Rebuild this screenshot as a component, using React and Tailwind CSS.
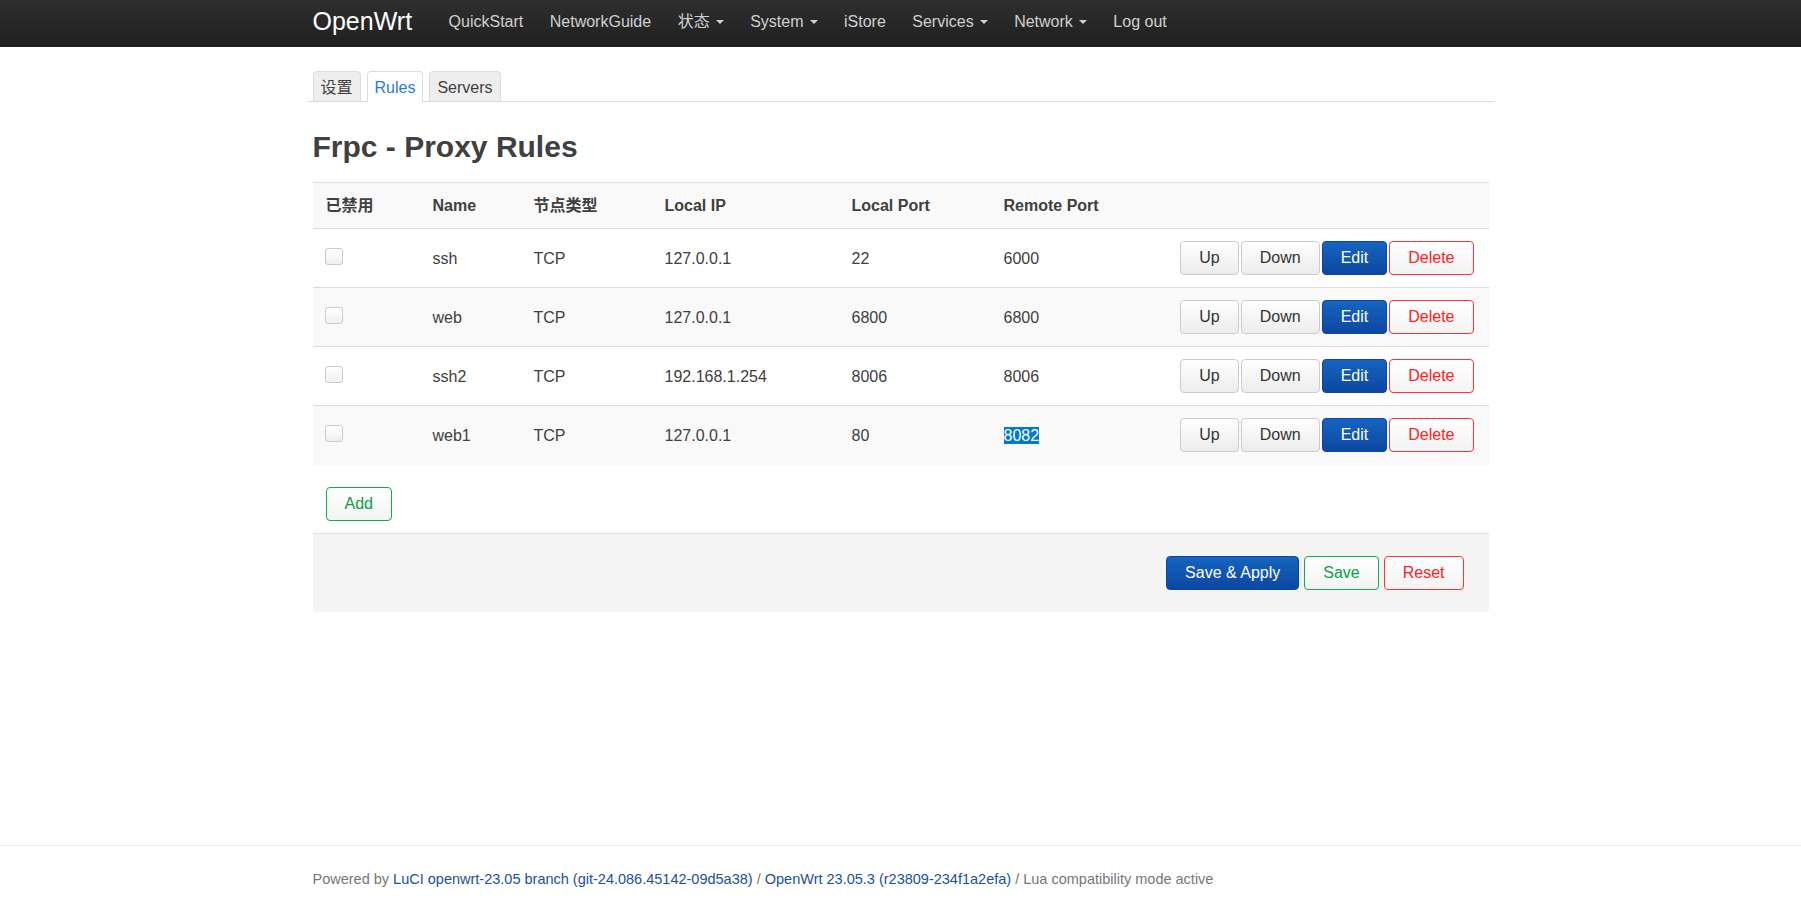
const font = { fontFamily: '"Liberation Sans", Arial, "Noto Sans CJK SC", sans-serif' };

const navItems = [
  { label: 'QuickStart' },
  { label: 'NetworkGuide' },
  { label: '状态', caret: true },
  { label: 'System', caret: true },
  { label: 'iStore' },
  { label: 'Services', caret: true },
  { label: 'Network', caret: true },
  { label: 'Log out' },
];

const rules = [
  { name: 'ssh', type: 'TCP', ip: '127.0.0.1', local: '22', remote: '6000' },
  { name: 'web', type: 'TCP', ip: '127.0.0.1', local: '6800', remote: '6800' },
  { name: 'ssh2', type: 'TCP', ip: '192.168.1.254', local: '8006', remote: '8006' },
  { name: 'web1', type: 'TCP', ip: '127.0.0.1', local: '80', remote: '8082', selected: true },
];

const Caret = () => (
  <span className="ml-[6px] inline-block w-0 h-0 border-t-[4px] border-t-[#cfcfcf] border-x-[4px] border-x-transparent align-middle" />
);

const btnBase = 'rounded-[4px] border px-[18px] py-[6px] text-[16px] leading-[20px]';
const btnGray = `${btnBase} border-[#ccc] text-[#333] bg-gradient-to-b from-white to-[#ececec]`;
const btnBlue = `${btnBase} border-[#0d47a1] text-white bg-gradient-to-b from-[#1565c0] to-[#0d47a1]`;
const btnRed = `${btnBase} border-[#f33] text-[#f22] bg-gradient-to-b from-white to-[#f3f3f3]`;
const btnGreen = `${btnBase} border-[#11aa55] text-[#0a9f4a] bg-gradient-to-b from-white to-[#f3f3f3]`;

export default function App() {
  return (
    <div className="min-h-[904px] flex flex-col bg-white text-[#404040] text-[16px]" style={font}>
      {/* header */}
      <header className="h-[47px] bg-gradient-to-b from-[#2e2e2e] to-[#202020]">
        <div className="w-[1176px] mx-auto h-full flex items-center gap-[26.5px]">
          <span className="text-white text-[25px] leading-none mr-[10px] -mt-[4px]">OpenWrt</span>
          {navItems.map((item) => (
            <span key={item.label} className="text-[#d0d0d0] text-[16px] leading-none flex items-center -mt-[3px]">
              {item.label}
              {item.caret && <Caret />}
            </span>
          ))}
        </div>
      </header>

      <main className="w-[1176px] mx-auto">
        {/* tabs */}
        <div className="-mx-[6px] px-[6px] mt-[24px] flex gap-[6px] border-b border-[#ddd]">
          <span className="px-[7px] h-[31px] leading-[31px] border border-[#ddd] rounded-t-[4px] bg-[#eee] -mb-px">设置</span>
          <span className="px-[7px] h-[31px] leading-[31px] border border-[#ddd] border-b-white rounded-t-[4px] bg-white text-[#2a7ad8] -mb-px">Rules</span>
          <span className="px-[7px] h-[31px] leading-[31px] border border-[#ddd] rounded-t-[4px] bg-[#eee] -mb-px">Servers</span>
        </div>

        <h2 className="mt-[27px] text-[30px] leading-[36px] font-bold text-[#404040]">Frpc - Proxy Rules</h2>

        {/* table */}
        <table className="mt-[17px] w-full table-fixed border-collapse">
          <thead>
            <tr className="bg-[#f9f9f9] border-t border-[#ddd] h-[46px] text-left">
              <th className="w-[107px] pl-[13px] font-bold">已禁用</th>
              <th className="w-[101px] pl-[13px] font-bold">Name</th>
              <th className="w-[131px] pl-[13px] font-bold">节点类型</th>
              <th className="w-[187px] pl-[13px] font-bold">Local IP</th>
              <th className="w-[152px] pl-[13px] font-bold">Local Port</th>
              <th className="pl-[13px] font-bold">Remote Port</th>
              <th className="w-[320px]" />
            </tr>
          </thead>
          <tbody>
            {rules.map((r, i) => (
              <tr key={r.name} className={`h-[59px] border-t border-[#ddd] ${i % 2 ? 'bg-[#f9f9f9]' : 'bg-white'}`}>
                <td className="pl-[12px]">
                  <div className="w-[18px] h-[17px] mb-[4px] rounded-[3px] border border-[#ccc] bg-gradient-to-b from-white to-[#f0f0f0]" />
                </td>
                <td className="pl-[13px] pt-[2px]">{r.name}</td>
                <td className="pl-[13px] pt-[2px]">{r.type}</td>
                <td className="pl-[13px] pt-[2px]">{r.ip}</td>
                <td className="pl-[13px] pt-[2px]">{r.local}</td>
                <td className="pl-[13px] pt-[2px]">
                  {r.selected ? <span className="bg-[#0078d7] text-white">{r.remote}</span> : r.remote}
                </td>
                <td className="pr-[15px]">
                  <div className="flex justify-end gap-[2px]">
                    <button className={btnGray}>Up</button>
                    <button className={btnGray}>Down</button>
                    <button className={btnBlue}>Edit</button>
                    <button className={btnRed}>Delete</button>
                  </div>
                </td>
              </tr>
            ))}
          </tbody>
        </table>

        <div className="mt-[22px] pl-[13px]">
          <button className={btnGreen}>Add</button>
        </div>

        {/* page actions */}
        <div className="mt-[12px] bg-[#f4f4f4] border-t border-[#e3e3e3] rounded-b-[4px] pt-[22px] pb-[22px] pr-[25px] flex justify-end gap-[5px]">
          <button className={btnBlue}>Save &amp; Apply</button>
          <button className={btnGreen}>Save</button>
          <button className={btnRed}>Reset</button>
        </div>
      </main>

      {/* footer */}
      <footer className="mt-auto border-t border-[#eee] h-[59px]">
        <div className="w-[1176px] mx-auto pt-[25px] text-[14.5px] leading-[16px] text-[#777]">
          Powered by{' '}
          <a className="text-[#1a4fa3]">LuCI openwrt-23.05 branch (git-24.086.45142-09d5a38)</a>
          {' / '}
          <a className="text-[#1a4fa3]">OpenWrt 23.05.3 (r23809-234f1a2efa)</a>
          {' / Lua compatibility mode active'}
        </div>
      </footer>
    </div>
  );
}
